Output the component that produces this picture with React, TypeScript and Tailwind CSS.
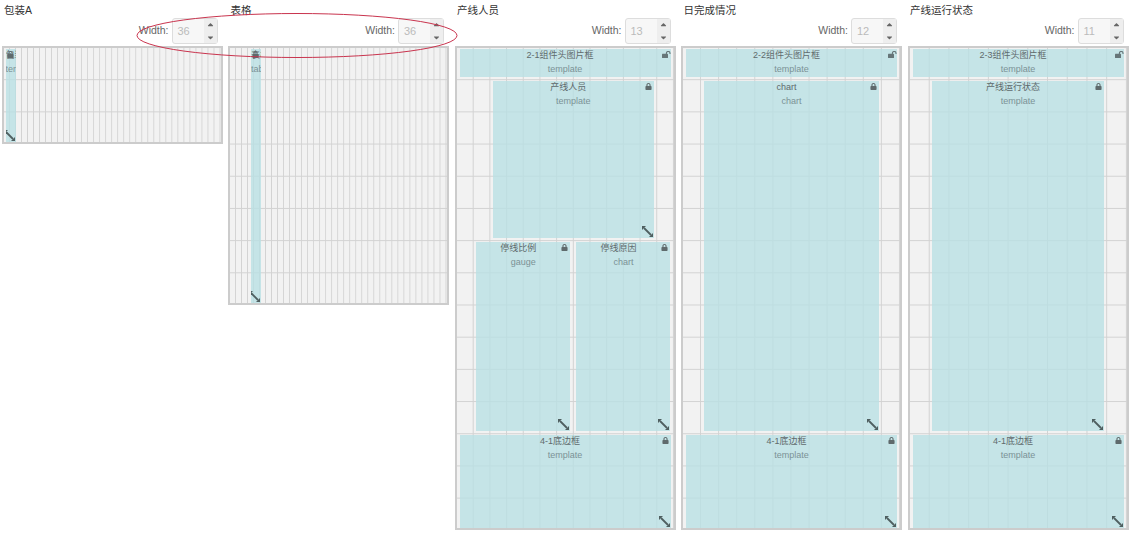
import { FaLock, FaCaretUp, FaCaretDown } from "react-icons/fa";

type Item = {
  x: number;
  y: number;
  w: number;
  h: number;
  title: string;
  type: string;
  open?: boolean;
};

type Panel = {
  name: string;
  cols: number;
  rows: number;
  items: Item[];
};

const ROW = 32.2;

const footer = (cols: number): Item => ({
  x: 0,
  y: 12,
  w: cols,
  h: 3,
  title: "4-1底边框",
  type: "template",
});

const panels: Panel[] = [
  {
    name: "包装A",
    cols: 36,
    rows: 3,
    items: [{ x: -0.15, y: 0, w: 2.8, h: 3, title: "包装A", type: "template" }],
  },
  {
    name: "表格",
    cols: 36,
    rows: 8,
    items: [{ x: 3, y: 0, w: 2.6, h: 8, title: "表格", type: "table" }],
  },
  {
    name: "产线人员",
    cols: 13,
    rows: 15,
    items: [
      { x: 0, y: 0, w: 13, h: 1, title: "2-1组件头图片框", type: "template", open: true },
      { x: 2, y: 1, w: 10, h: 5, title: "产线人员", type: "template" },
      { x: 1, y: 6, w: 6, h: 6, title: "停线比例", type: "gauge" },
      { x: 7, y: 6, w: 6, h: 6, title: "停线原因", type: "chart" },
      footer(13),
    ],
  },
  {
    name: "日完成情况",
    cols: 12,
    rows: 15,
    items: [
      { x: 0, y: 0, w: 12, h: 1, title: "2-2组件头图片框", type: "template", open: true },
      { x: 1, y: 1, w: 10, h: 11, title: "chart", type: "chart" },
      footer(12),
    ],
  },
  {
    name: "产线运行状态",
    cols: 11,
    rows: 15,
    items: [
      { x: 0, y: 0, w: 11, h: 1, title: "2-3组件头图片框", type: "template", open: true },
      { x: 1, y: 1, w: 9, h: 11, title: "产线运行状态", type: "template" },
      footer(11),
    ],
  },
];

// thick diagonal double arrow in the widget's corner
function ResizeHandle() {
  return (
    <svg
      width="11"
      height="11"
      viewBox="0 0 11 11"
      className="absolute bottom-[1px] right-[1px] text-[#4f5f60]"
    >
      <path d="M2 2 L9 9" stroke="currentColor" strokeWidth="1.8" />
      <path d="M0 0 H4 L0 4 Z M11 11 H7 L11 7 Z" fill="currentColor" />
    </svg>
  );
}

// open padlock: body on the left, shackle swinging out to the right
function OpenLock() {
  return (
    <svg
      width="9"
      height="7"
      viewBox="0 0 9 7"
      className="absolute right-0 top-[2px] text-[#667578]"
    >
      <rect x="0" y="2.8" width="6" height="4.2" rx="0.5" fill="currentColor" />
      <path d="M4.4 3 V2.2 A1.7 1.7 0 0 1 8 2.2 V3" fill="none" stroke="currentColor" strokeWidth="1.1" />
    </svg>
  );
}

function Widget({ item, cols }: { item: Item; cols: number }) {
  return (
    <div
      className="absolute overflow-hidden bg-[#b9e0e4]/80 text-center text-[9px] leading-[13.5px] text-[#7b9296]"
      style={{
        left: `calc(${(item.x / cols) * 100}% + 3px)`,
        width: `calc(${(item.w / cols) * 100}% - 6px)`,
        top: item.y * ROW + 1,
        height: item.h * ROW - 4,
      }}
    >
      <div className="whitespace-nowrap pr-[10px] text-[#5f6a6c]">{item.title}</div>
      <div className="whitespace-nowrap">{item.type}</div>
      {item.open ? (
        <OpenLock />
      ) : (
        <span className="absolute right-[2px] top-[2px] text-[7px] text-[#5f6a6c]">
          <FaLock />
        </span>
      )}
      {item.h > 1 && <ResizeHandle />}
    </div>
  );
}

function WidthField({ value }: { value: number }) {
  return (
    <div className="flex h-[26px] items-center justify-end gap-[3px] text-[10.5px] text-[#666]">
      <span>Width:</span>
      <div className="flex h-[26px] w-[46px] rounded-[3px] border border-[#ddd] bg-[#f7f7f7]">
        <span className="flex w-[31px] items-center pl-[5px] text-[11px] text-[#bbb]">
          {value}
        </span>
        <span className="flex flex-1 flex-col items-center justify-center gap-[4px] bg-[#eeeeee] text-[9px] text-[#666]">
          <FaCaretUp />
          <FaCaretDown />
        </span>
      </div>
    </div>
  );
}

function PanelColumn({ panel }: { panel: Panel }) {
  const colPct = 100 / panel.cols;
  return (
    <div className="w-[226.5px] shrink-0 pl-[1.5px] pr-[4px]">
      <div className="h-[18px] pl-[2.5px] pt-[3px] text-[10.5px] leading-[14px] text-[#333]">
        {panel.name}
      </div>
      <div className="pr-[5px]">
        <WidthField value={panel.cols} />
      </div>
      <div
        className="relative mt-[2px] box-content border-2 border-[#cccccc] bg-[#f2f2f2]"
        style={{
          height: panel.rows * ROW - 3,
          backgroundImage:
            "linear-gradient(to right, #d2d2d2 1px, transparent 1px), linear-gradient(to bottom, #d2d2d2 1px, transparent 1px)",
          backgroundSize: `${colPct}% 100%, 100% ${ROW}px`,
          backgroundPosition: "-1px 0, 0 -1px",
        }}
      >
        {panel.items.map((item) => (
          <Widget key={item.title + item.y + item.x} item={item} cols={panel.cols} />
        ))}
      </div>
    </div>
  );
}

export default function App() {
  return (
    <div className="relative h-[544px] w-[1136px] overflow-hidden bg-white font-['Liberation_Sans','Noto_Sans_CJK_SC',sans-serif]">
      <div className="flex">
        {panels.map((panel) => (
          <PanelColumn key={panel.name} panel={panel} />
        ))}
      </div>
      {/* red hand-drawn marker around the two width fields */}
      <svg className="pointer-events-none absolute left-[130px] top-[8px]" width="335" height="56">
        <ellipse cx="167" cy="27.5" rx="160" ry="22" fill="none" stroke="#c9344e" strokeWidth="1" />
      </svg>
    </div>
  );
}
